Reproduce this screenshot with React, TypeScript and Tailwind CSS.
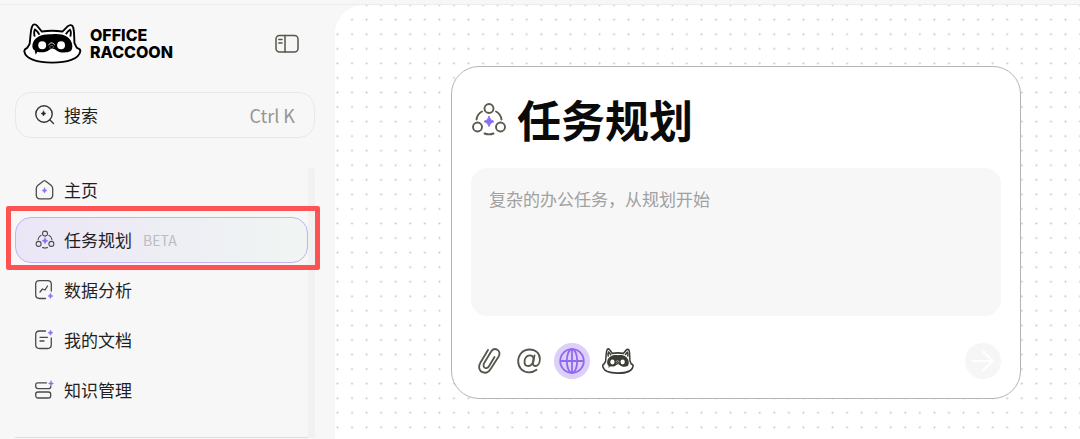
import type { ReactNode } from 'react';

const SPARK = 'M0 -5 Q0.9 -0.9 5 0 Q0.9 0.9 0 5 Q-0.9 0.9 -5 0 Q-0.9 -0.9 0 -5Z';

function Spark({ x, y, scale = 1, className = 'fill-[#8b6cf6]' }: { x: number; y: number; scale?: number; className?: string }) {
  return <path d={SPARK} transform={`translate(${x} ${y}) scale(${scale})`} className={className} />;
}

function Raccoon({ className, stroke = 5.5 }: { className: string; stroke?: number }) {
  return (
    <svg viewBox="0 0 172 120" preserveAspectRatio="none" className={className} fill="none" aria-hidden="true">
      <path
        d="M19 62C22 48 21 22 27 9c3-7 10-6 14-1l14 17c19-3 40-3 60 0l15-15c6-6 14-5 16 2 4 12 3 32 4 47l7 14c7 2 11 5 10 10-4 23-39 33-82 33S8 106 4 84c-1-4 2-8 8-11Z"
        fill="#fff"
        stroke="currentColor"
        strokeWidth={stroke}
        strokeLinejoin="round"
      />
      <path d="M34 40c-2-9-2-17 1-21 6 4 10 9 13 15M138 40c2-9 2-17-1-20-6 4-9 8-12 13" stroke="currentColor" strokeWidth={stroke} />
      <path d="M85 33c30-3 51 6 57 25 4 11 1 22-4 25-13 6-35 4-43-5-5-4-13-4-18 0-9 8-25 9-35 6l-5 9-3-13c-7-3-8-13-5-22 6-18 27-27 56-25Z" fill="currentColor" />
      <circle cx="56" cy="65" r="11.500" fill="#fff" />
      <circle cx="111" cy="65" r="11.500" fill="#fff" />
      <path d="M75 65c2-9 15-9 17 0" stroke="#fff" strokeWidth="2.500" />
      <path d="M78 69c2-4 9-4 11 0 0 4-3 6-5.500 6S78 73 78 69Z" fill="currentColor" stroke="#fff" strokeWidth="1.200" />
    </svg>
  );
}

function TaskIcon({ className }: { className: string }) {
  return (
    <svg viewBox="0 0 36 36" className={className} fill="none" stroke="currentColor" strokeWidth="1.900" strokeLinecap="round" aria-hidden="true">
      <circle cx="18" cy="6.500" r="4.500" />
      <circle cx="6.500" cy="25" r="4.500" />
      <circle cx="29.500" cy="25" r="4.500" />
      <path d="M5.500 17.500C6 14 8 11 11 9.500M30.500 17.500C30 14 28 11 25 9.500M13.500 31.500C16 32.500 20 32.500 22.500 31.500" />
      <Spark x={18} y={19.5} className="fill-[#8b6cf6] stroke-[#8b6cf6] stroke-1" />
    </svg>
  );
}

function NavIcon({ children }: { children: ReactNode }) {
  return (
    <svg viewBox="0 0 20 20" className="size-5" fill="none" stroke="currentColor" strokeWidth="1.300" strokeLinecap="round" strokeLinejoin="round" aria-hidden="true">
      {children}
    </svg>
  );
}

const navItems = [
  {
    label: '主页',
    icon: (
      <NavIcon>
        <path d="M8.500 1.100 3 5.300Q1.300 6.600 1.300 8.500V15Q1.300 18.800 5 18.800H14Q17.700 18.800 17.700 15V8.500Q17.700 6.600 16 5.300L10.500 1.100Q9.500 .3 8.500 1.100Z" />
        <Spark x={9.5} y={10.5} scale={0.5} className="fill-[#8b6cf6] stroke-[#8b6cf6] stroke-1" />
      </NavIcon>
    ),
  },
  { label: '任务规划', icon: <TaskIcon className="size-5" />, tag: 'BETA', active: true },
  {
    label: '数据分析',
    icon: (
      <NavIcon>
        <path d="M10.500 18.500H4.500Q.7 18.500 .7 14.500V4Q.7 .7 4.500 .7H12.500Q16.300 .7 16.300 4V11" />
        <path d="M5 12 7.500 9 10 10 12.500 6" />
        <Spark x={15.5} y={16} scale={0.5} className="fill-[#8b6cf6] stroke-[#8b6cf6] stroke-1" />
      </NavIcon>
    ),
  },
  {
    label: '我的文档',
    icon: (
      <NavIcon>
        <path d="M10.500 1H4.500Q.7 1 .7 5V14.500Q.7 18.500 4.500 18.500H12.500Q16.300 18.500 16.300 14.500V8M5 7.300H12.500M5 11H9" />
        <Spark x={15.5} y={2.8} scale={0.5} className="fill-[#8b6cf6] stroke-[#8b6cf6] stroke-1" />
      </NavIcon>
    ),
  },
  {
    label: '知识管理',
    icon: (
      <NavIcon>
        <path d="M11.500 2.800H3.200Q.7 2.800 .7 5V6.300Q.7 8.700 3.200 8.700H13.300Q15.800 8.700 15.800 6.500" />
        <rect x=".7" y="12" width="15" height="6" rx="2.200" />
        <Spark x={16} y={3.5} scale={0.5} className="fill-[#8b6cf6] stroke-[#8b6cf6] stroke-1" />
      </NavIcon>
    ),
  },
];

function Sidebar() {
  return (
    <aside className="w-[335px] shrink-0 flex flex-col pl-[15px] pr-5">
      <div className="flex items-center justify-between pt-[18px] pl-2 pr-4">
        <a href="#home" className="flex items-center gap-2 text-black">
          <Raccoon className="w-[59px] h-[41px]" />
          <span className="font-['Inter'] font-extrabold text-base leading-[17px]">
            OFFICE
            <br />
            RACCOON
          </span>
        </a>
        <button aria-label="收起侧边栏" className="text-[#55554a]">
          <svg viewBox="0 0 24 20" className="w-6 h-5" fill="none" stroke="currentColor" strokeWidth="1.500" strokeLinecap="round">
            <rect x="1" y="1.500" width="22" height="16.500" rx="3.500" />
            <path d="M10 1.500V18M3.800 5.500H7M3.800 9H7" />
          </svg>
        </button>
      </div>

      <button className="mt-7 h-[46px] w-full flex items-center rounded-2xl border border-[#e8e8e8] px-[19px] text-[17px]">
        <svg viewBox="0 0 20 20" className="size-5 mr-[9px] text-[#333]" fill="none" stroke="currentColor" strokeWidth="1.400" strokeLinecap="round" aria-hidden="true">
          <circle cx="9" cy="9" r="8.200" />
          <path d="m15 15 3.500 3.500" />
          <Spark x={8.5} y={8.5} scale={0.5} className="fill-[#222] stroke-[#222] stroke-1" />
        </svg>
        搜索
        <span className="ml-auto text-lg text-[#96968f]">Ctrl K</span>
      </button>

      <div className="flex mt-[29px]">
        <div className="flex-1">
          <nav className="flex flex-col gap-1">
            {navItems.map((item) => (
              <div key={item.label} className="relative">
                <a
                  href="#"
                  aria-current={item.active ? 'page' : undefined}
                  className={`flex items-center gap-[9px] h-[46px] pl-[19px] rounded-2xl border text-[17px] ${
                    item.active ? 'border-[#c3b1f1] bg-linear-to-r from-[#ebe6f7] to-[#f0f5f2]' : 'border-transparent'
                  }`}
                >
                  <span className="text-[#4a4a4a]">{item.icon}</span>
                  {item.label}
                  {item.tag && <span className="ml-[2px] text-sm text-[#bcbcc2]">{item.tag}</span>}
                </a>
                {item.active && (
                  <div className="absolute z-10 -left-[9px] -right-3 -top-[11px] -bottom-[7px] border-5 border-[#ff5252] rounded-xs pointer-events-none" />
                )}
              </div>
            ))}
          </nav>
          <hr className="mt-6 border-[#dedede]" />
        </div>
        <div className="w-[7px] rounded-t-full bg-[#f1f1f1]" />
      </div>
    </aside>
  );
}

function Planner() {
  return (
    <main className="relative flex-1 bg-white rounded-tl-[28px] overflow-hidden pt-[61px] pl-[116px] pr-[59px] pb-10">
      <svg className="absolute inset-0 w-full h-full" aria-hidden="true">
        <defs>
          <pattern id="dots" x="-4.800" y="-7.200" width="14.560" height="14.560" patternUnits="userSpaceOnUse">
            <circle cx="7.280" cy="7.280" r="1" fill="#c4c4c4" />
          </pattern>
        </defs>
        <rect width="100%" height="100%" fill="url(#dots)" />
      </svg>

      <section className="relative bg-white border border-[#b4b4b4] rounded-[28px] px-[19px] pt-5 pb-[19px]">
        <h1 className="flex items-center gap-[10px] text-[44px] leading-[65px] font-bold text-[#0a0a0a]">
          <TaskIcon className="size-9 text-[#5b5b4e]" />
          任务规划
        </h1>
        <textarea
          aria-label="任务描述"
          placeholder="复杂的办公任务，从规划开始"
          className="block mt-4 w-full h-[148px] resize-none rounded-2xl bg-[#f7f7f7] px-[18px] py-[18px] text-[17px] leading-[26px] placeholder:text-[#a0a0a0] outline-none"
        />
        <div className="mt-[27px] flex items-center gap-1 text-[#55554a]">
          <button aria-label="添加附件" className="size-9 flex items-center justify-center">
            <svg viewBox="0 0 24 26" className="w-6 h-[26px]" fill="none" stroke="currentColor" strokeWidth="1.800" strokeLinecap="round">
              <path d="M11 2 3.500 14.500C.8 19.200 2.500 23 5.500 24.200 8.500 25.500 11.800 24 13.800 20.800L21.500 8.800C23.300 5.800 22.500 2.900 20.300 1.700 18.100.5 15.500 1.200 14 3.800L7.500 14.500C6 17 6.300 18.900 7.800 19.700 9.200 20.400 11 19.900 12 18.200L17.500 9" />
            </svg>
          </button>
          <button aria-label="提及" className="size-9 flex items-center justify-center">
            <svg viewBox="0 0 24 26" className="w-6 h-[26px]" fill="none" stroke="currentColor" strokeWidth="1.800" strokeLinecap="round" strokeLinejoin="round">
              <path d="M19.500 21.800C17.500 23.500 15 24.300 12 24.300 5.500 24.300 1.200 19.700 1.200 13.200 1.200 6.500 6 1.500 12.500 1.500 18.700 1.500 22.900 5.500 22.900 11 22.900 15.500 20.700 18 18.200 18 16.300 18 15.700 16.600 16 15L17.500 7.500" />
              <path d="M16.500 11.500C16.500 8.900 14.900 7.300 12.700 7.300 9.700 7.300 7.500 10.300 7.500 13.700 7.500 16.400 9 18 11.200 18 14 18 16.500 15 16.500 11.500Z" />
            </svg>
          </button>
          <button aria-label="联网搜索" className="ml-[3px] size-9 flex items-center justify-center rounded-full bg-[#ddd0f8] text-[#9168ee]">
            <svg viewBox="0 0 26 26" className="size-[26px]" fill="none" stroke="currentColor" strokeWidth="1.800">
              <circle cx="13" cy="13" r="11.800" />
              <ellipse cx="13" cy="13" rx="5.200" ry="11.800" />
              <path d="M1.200 13H24.800M13 1.200V24.800" />
            </svg>
          </button>
          <button aria-label="小浣熊" className="ml-2 h-9 flex items-center justify-center text-[#3c3c35]">
            <Raccoon className="w-8 h-[26px]" stroke={8} />
          </button>
          <button aria-label="发送" className="ml-auto size-9 flex items-center justify-center rounded-full bg-[#f6f6f6] text-white">
            <svg viewBox="0 0 24 24" className="size-6" fill="none" stroke="currentColor" strokeWidth="2.200">
              <path d="M1.500 12H21.500M11.500 2 21.500 12 11.500 22" />
            </svg>
          </button>
        </div>
      </section>
    </main>
  );
}

export default function App() {
  return (
    <div className="min-h-screen flex flex-col bg-[#f7f7f7] text-[#1f1f1f] font-['Noto_Sans_CJK_SC',sans-serif]">
      <div className="h-[5px] border-b border-[#ebebeb] shrink-0" />
      <div className="flex flex-1">
        <Sidebar />
        <Planner />
      </div>
    </div>
  );
}
